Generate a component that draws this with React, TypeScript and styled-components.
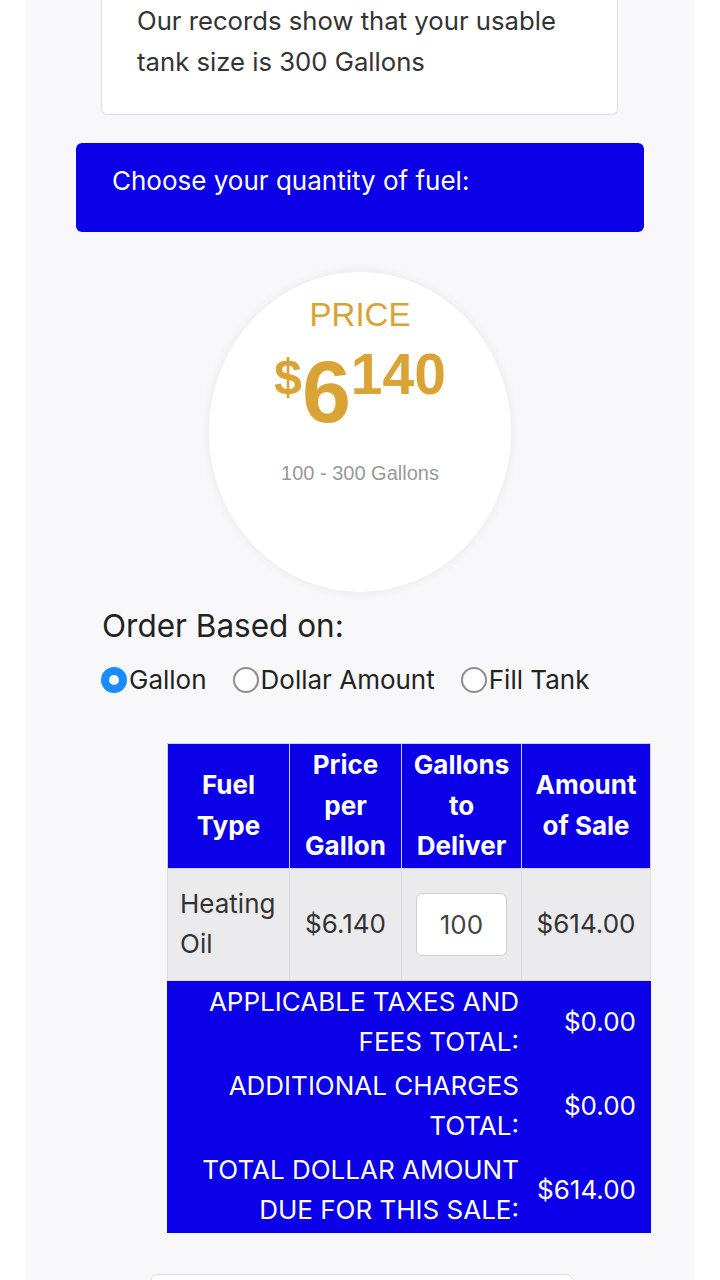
import * as React from "react";
import styled, { createGlobalStyle } from "styled-components";

const BLUE = "#0b00e8";
const GOLD = "#d9a435";

const GlobalStyle = createGlobalStyle`
	html, body {
		margin: 0;
		padding: 0;
		background: #ffffff;
	}
	body {
		font-family: Inter, "Noto Sans", "Liberation Sans", sans-serif;
		color: #212529;
		-webkit-font-smoothing: antialiased;
	}
`;

const Page = styled.div`
	width: 668px;
	min-height: 1280px;
	margin: 0 0 0 26px;
	background: #f8f8fa;
	display: flex;
	flex-direction: column;
	align-items: stretch;
`;

const InfoCard = styled.div`
	margin: 0 76px 0 75px;
	background: #fff;
	border: 1px solid #dfdfe3;
	border-top: none;
	border-radius: 0 0 6px 6px;
	padding: 0 20px 32px 35px;
	font-size: 25.7px;
	line-height: 41px;
	color: #333;
`;

const Banner = styled.div`
	margin: 28px 50px 0 50px;
	height: 89px;
	box-sizing: border-box;
	background: ${BLUE};
	border-radius: 6px;
	color: #fff;
	font-size: 26px;
	line-height: 30px;
	padding: 23px 36px 0;
`;

const PriceCircle = styled.div`
	align-self: center;
	margin-top: 40px;
	width: 302px;
	height: 320px;
	border-radius: 50%;
	background: #fff;
	box-shadow: 0 0 12px rgba(0, 0, 0, 0.07);
	display: flex;
	flex-direction: column;
	align-items: center;
	font-family: "Liberation Sans", Arial, sans-serif;
`;

const PriceLabel = styled.div`
	margin-top: 24px;
	color: ${GOLD};
	font-size: 33px;
	line-height: 38px;
`;

const PriceFigure = styled.div`
	color: ${GOLD};
	font-weight: 700;
	line-height: 1;
	margin-top: 12px;
	white-space: nowrap;
`;

const Whole = styled.span`
	font-size: 88px;
`;

const Sup = styled.span<{ size: number }>`
	font-size: ${(p) => p.size}px;
	vertical-align: 28px;
`;

const Range = styled.div`
	margin-top: 26px;
	color: #999;
	font-size: 20px;
`;

const OrderTitle = styled.div`
	margin: 16px 0 0 76px;
	font-size: 31.5px;
	line-height: 36px;
	color: #222;
`;

const RadioRow = styled.div`
	margin: 20px 0 0 75px;
	display: flex;
	align-items: center;
	gap: 26px;
	font-size: 26px;
	line-height: 32px;
	color: #222;
`;

const RadioLabel = styled.label`
	display: flex;
	align-items: center;
`;

const Radio = styled.input`
	appearance: none;
	margin: 0 2px 0 0;
	width: 26px;
	height: 26px;
	border-radius: 50%;
	box-sizing: border-box;
	border: 2px solid #8e8e8e;
	background: #fff;

	&:checked {
		border: 8px solid #1a8cff;
		background: #fff;
	}
`;

const Table = styled.table`
	margin: 47px 0 0 141px;
	width: 483px;
	border-collapse: collapse;
	table-layout: fixed;
	font-size: 26px;
	line-height: 40.5px;
`;

const Th = styled.th`
	background: ${BLUE};
	color: #fff;
	font-weight: 700;
	text-align: center;
	vertical-align: middle;
	padding: 1px 2px;
	border: 1px solid #cfcff0;
`;

const Td = styled.td<{ align?: string }>`
	background: #ebebed;
	color: #333;
	text-align: ${(p) => p.align || "center"};
	vertical-align: middle;
	padding: 15px 12px;
	border: 1px solid #dcdce0;
`;

const QtyInput = styled.input`
	width: 91px;
	height: 63px;
	box-sizing: border-box;
	border: 1px solid #cfcfd4;
	border-radius: 6px;
	background: #fff;
	text-align: center;
	font-family: inherit;
	font-size: 26px;
	color: #444;
	padding: 0;
`;

const SumLabel = styled.td`
	background: ${BLUE};
	color: #fff;
	text-align: right;
	vertical-align: middle;
	padding: 1px 2px 1px 12px;
	border: 1px solid ${BLUE};
	text-transform: uppercase;
`;

const SumValue = styled.td`
	background: ${BLUE};
	color: #fff;
	text-align: right;
	vertical-align: middle;
	padding: 1px 14px 1px 4px;
	border: 1px solid ${BLUE};
`;

const BottomCard = styled.div`
	margin: 41px 0 0 124px;
	width: 422px;
	height: 40px;
	background: #fff;
	border: 1px solid #dfdfe3;
	border-radius: 8px;
`;

const summary = [
	{ label: "Applicable taxes and fees total:", value: "$0.00" },
	{ label: "Additional charges total:", value: "$0.00" },
	{ label: "Total dollar amount due for this sale:", value: "$614.00" },
];

export default function App() {
	const [basis, setBasis] = React.useState("gallon");
	const [qty, setQty] = React.useState("100");

	return (
		<>
			<GlobalStyle />
			<Page>
				<InfoCard>Our records show that your usable tank size is 300 Gallons</InfoCard>
				<Banner>Choose your quantity of fuel:</Banner>
				<PriceCircle>
					<PriceLabel>PRICE</PriceLabel>
					<PriceFigure>
						<Sup size={50}>$</Sup>
						<Whole>6</Whole>
						<Sup size={57}>140</Sup>
					</PriceFigure>
					<Range>100 - 300 Gallons</Range>
				</PriceCircle>
				<OrderTitle>Order Based on:</OrderTitle>
				<RadioRow>
					{[
						["gallon", "Gallon"],
						["dollar", "Dollar Amount"],
						["fill", "Fill Tank"],
					].map(([key, text]) => (
						<RadioLabel key={key}>
							<Radio type="radio" name="basis" checked={basis === key} onChange={() => setBasis(key)} />
							{text}
						</RadioLabel>
					))}
				</RadioRow>
				<Table>
					<colgroup>
						<col style={{ width: 122 }} />
						<col style={{ width: 112 }} />
						<col style={{ width: 120 }} />
						<col style={{ width: 129 }} />
					</colgroup>
					<thead>
						<tr>
							<Th>Fuel Type</Th>
							<Th>Price per Gallon</Th>
							<Th>Gallons to Deliver</Th>
							<Th>Amount of Sale</Th>
						</tr>
					</thead>
					<tbody>
						<tr>
							<Td align="left">Heating Oil</Td>
							<Td>$6.140</Td>
							<Td>
								<QtyInput value={qty} onChange={(e) => setQty(e.target.value)} />
							</Td>
							<Td>$614.00</Td>
						</tr>
						{summary.map((row) => (
							<tr key={row.label}>
								<SumLabel colSpan={3}>{row.label}</SumLabel>
								<SumValue>{row.value}</SumValue>
							</tr>
						))}
					</tbody>
				</Table>
				<BottomCard />
			</Page>
		</>
	);
}
